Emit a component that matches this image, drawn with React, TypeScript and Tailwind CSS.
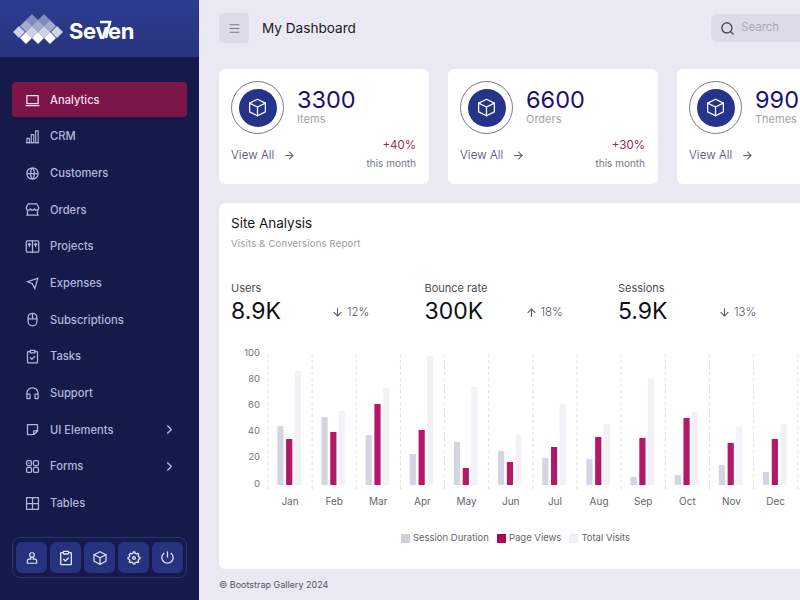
import type { ReactNode } from 'react'
import {
  RiArrowDownLine,
  RiArrowRightLine,
  RiArrowRightSLine,
  RiArrowUpLine,
  RiGlobalLine,
  RiHeadphoneLine,
  RiMacbookLine,
  RiMenuLine,
  RiSearchLine,
  RiSendPlaneLine,
  RiSettings5Line,
  RiShutDownLine,
  RiStickyNoteLine,
  RiStore2Line,
} from 'react-icons/ri'

function Icon({ children, size = 15, stroke = 2 }: { children: ReactNode; size?: number; stroke?: number }) {
  return (
    <svg
      viewBox="0 0 24 24"
      width={size}
      height={size}
      fill="none"
      stroke="currentColor"
      strokeWidth={stroke}
      strokeLinecap="round"
      strokeLinejoin="round"
    >
      {children}
    </svg>
  )
}

function BarsIcon() {
  return (
    <Icon stroke={1.8}>
      <path d="M2 22h20" />
      <rect x="3" y="15" width="4" height="7" />
      <rect x="10" y="9" width="4" height="13" />
      <rect x="17" y="3" width="4" height="19" />
    </Icon>
  )
}

function PackageIcon() {
  return (
    <Icon>
      <rect x="2" y="3" width="20" height="18" rx="2" />
      <path d="M12 3v18M7 8v4M17 8v4M5 9l2-2 2 2M15 9l2-2 2 2" />
    </Icon>
  )
}

function MouseIcon() {
  return (
    <Icon>
      <rect x="5" y="2" width="14" height="20" rx="7" />
      <path d="M12 2v9M5 11h14" />
    </Icon>
  )
}

function ClipboardCheckIcon({ size = 15 }: { size?: number }) {
  return (
    <Icon size={size}>
      <path d="M8 4H5a1 1 0 0 0-1 1v16a1 1 0 0 0 1 1h14a1 1 0 0 0 1-1V5a1 1 0 0 0-1-1h-3" />
      <rect x="8" y="2" width="8" height="4" rx="1" />
      <path d="M8.5 14l2.5 2.5 4.5-4.5" />
    </Icon>
  )
}

function FormsIcon() {
  return (
    <Icon>
      <rect x="2.5" y="2.5" width="8" height="8" rx="2.5" />
      <rect x="13.5" y="2.5" width="8" height="8" rx="2.5" />
      <rect x="2.5" y="13.5" width="8" height="8" rx="2.5" />
      <rect x="13.5" y="13.5" width="8" height="8" rx="2.5" />
      <path d="M5 6.5l1.2 1.2L8.2 5.5" strokeWidth="1.4" />
    </Icon>
  )
}

function TableIcon() {
  return (
    <Icon>
      <rect x="2.5" y="2.5" width="19" height="19" />
      <path d="M12 2.5v19M2.5 12h19" />
    </Icon>
  )
}

function UserBaseIcon() {
  return (
    <Icon size={14}>
      <circle cx="12" cy="7" r="4" />
      <path d="M10 11v3H7a3 3 0 0 0-3 3v4h16v-4a3 3 0 0 0-3-3h-3v-3" />
    </Icon>
  )
}

function CubeIcon({ size, stroke = 1.5 }: { size: number; stroke?: number }) {
  return (
    <Icon size={size} stroke={stroke}>
      <path d="M12 2.5l9 4.5v10l-9 4.5-9-4.5V7z" />
      <path d="M3 7l9 4.5L21 7M12 11.5v10" />
    </Icon>
  )
}

const iconClass = 'h-[15px] w-[15px]'

const navItems: { label: string; icon: ReactNode; active?: boolean; more?: boolean }[] = [
  { label: 'Analytics', icon: <RiMacbookLine className={iconClass} />, active: true },
  { label: 'CRM', icon: <BarsIcon /> },
  { label: 'Customers', icon: <RiGlobalLine className={iconClass} /> },
  { label: 'Orders', icon: <RiStore2Line className={iconClass} /> },
  { label: 'Projects', icon: <PackageIcon /> },
  { label: 'Expenses', icon: <RiSendPlaneLine className={iconClass} /> },
  { label: 'Subscriptions', icon: <MouseIcon /> },
  { label: 'Tasks', icon: <ClipboardCheckIcon /> },
  { label: 'Support', icon: <RiHeadphoneLine className={iconClass} /> },
  { label: 'UI Elements', icon: <RiStickyNoteLine className={iconClass} />, more: true },
  { label: 'Forms', icon: <FormsIcon />, more: true },
  { label: 'Tables', icon: <TableIcon /> },
]

const toolButtons = [
  <UserBaseIcon key="user" />,
  <ClipboardCheckIcon key="tasks" size={16} />,
  <CubeIcon key="box" size={16} stroke={1.8} />,
  <RiSettings5Line key="settings" className="h-[16px] w-[16px]" />,
  <RiShutDownLine key="power" className="h-[15px] w-[15px]" />,
]

const summaryCards: { value: string; label: string; change?: string }[] = [
  { value: '3300', label: 'Items', change: '+40%' },
  { value: '6600', label: 'Orders', change: '+30%' },
  { value: '990', label: 'Themes' },
]

const stats = [
  { label: 'Users', value: '8.9K', change: '12%', down: true },
  { label: 'Bounce rate', value: '300K', change: '18%', down: false },
  { label: 'Sessions', value: '5.9K', change: '13%', down: true },
]

// bar heights in pixels, read off the picture: session, page views, total visits
const months: [string, number, number, number][] = [
  ['Jan', 59, 46, 114],
  ['Feb', 68, 53, 74],
  ['Mar', 50, 81, 97],
  ['Apr', 31, 55, 129],
  ['May', 43, 17, 98],
  ['Jun', 34, 23, 50],
  ['Jul', 27, 38, 81],
  ['Aug', 26, 48, 61],
  ['Sep', 8, 47, 107],
  ['Oct', 10, 67, 73],
  ['Nov', 20, 42, 59],
  ['Dec', 13, 46, 61],
]

const diamonds = [
  { y: 20, xs: [32, 44], opacity: 0.42 },
  { y: 26, xs: [26, 38, 50], opacity: 0.58 },
  { y: 32, xs: [19, 32, 44, 57], opacity: 0.78 },
  { y: 38, xs: [26, 38, 50], opacity: 1 },
]

function Logo() {
  return (
    <div className="flex h-[57px] shrink-0 items-center bg-gradient-to-b from-[#2c3c8f] to-[#27347f] pl-[13px]">
      <svg viewBox="13 13 50 32" className="h-8 w-[50px]">
        {diamonds.map((row) =>
          row.xs.map((x) => (
            <path
              key={`${row.y}-${x}`}
              d={`M${x} ${row.y - 6}l6 6-6 6-6-6z`}
              fill="#fff"
              fillOpacity={row.opacity}
            />
          )),
        )}
      </svg>
      <div className="relative mt-[4px] ml-[6px] text-[22px] leading-none font-bold tracking-[-0.3px] text-white">
        Seven
        <svg viewBox="0 0 14 20" className="absolute top-[0px] left-[30px] h-[20px] w-[14px]">
          <path d="M1 2h10L7 18" fill="none" stroke="#fff" strokeWidth="2.6" />
        </svg>
      </div>
    </div>
  )
}

function Sidebar() {
  return (
    <aside className="flex h-full w-[199px] shrink-0 flex-col bg-[#151a4b]">
      <Logo />
      <nav className="flex flex-1 flex-col px-3 pt-[25px]">
        {navItems.map((item) => (
          <div
            key={item.label}
            className={`mb-[1.67px] flex h-[35px] shrink-0 items-center gap-[10px] rounded pt-[1px] pr-[9px] pl-[13px] text-[11.2px] font-medium ${
              item.active ? 'bg-[#7d1648] text-[#f6dfe9]' : 'text-[#b3b6dc]'
            }`}
          >
            {item.icon}
            <span className="flex-1">{item.label}</span>
            {item.more && <RiArrowRightSLine className="h-[17px] w-[17px]" />}
          </div>
        ))}
      </nav>
      <div className="mx-3 mb-[22px] flex h-[41px] items-center gap-[3px] rounded-lg border border-[#2a3474] px-[3px]">
        {toolButtons.map((button, i) => (
          <div key={i} className="flex h-[31px] w-[31px] items-center justify-center rounded-md bg-[#27337f] text-[#e4e6f7]">
            {button}
          </div>
        ))}
      </div>
    </aside>
  )
}

function SummaryCard({ value, label, change }: { value: string; label: string; change?: string }) {
  return (
    <div className="h-[115px] w-[210px] shrink-0 rounded-md bg-white px-3 pt-3">
      <div className="flex items-center gap-[13px]">
        <div className="flex h-[53px] w-[53px] items-center justify-center rounded-full border border-[#77778f]">
          <div className="flex h-[38px] w-[38px] items-center justify-center rounded-full bg-[#26338b] text-white">
            <CubeIcon size={21} stroke={1.4} />
          </div>
        </div>
        <div className="-mt-[4px]">
          <div className="text-[23.5px] leading-[27px] text-[#1b1078]">{value}</div>
          <div className="text-[11px] leading-[12px] text-[#a3a3a8]">{label}</div>
        </div>
      </div>
      <div className="mt-[3px] flex items-start justify-between pr-[1px]">
        <div className="mt-[10px] flex items-center gap-[9px] text-[11.5px] font-light tracking-[0.1px] text-[#3f3e73]">
          View All
          <RiArrowRightLine className="h-[13px] w-[13px] text-[#666]" />
        </div>
        {change && (
          <div className="text-right">
            <div className="text-[11.5px] leading-[17px] text-[#a3255a]">{change}</div>
            <div className="text-[10px] leading-[18px] text-[#77777f]">this month</div>
          </div>
        )}
      </div>
    </div>
  )
}

function Chart() {
  const lines = Array.from({ length: 13 }, (_, i) => 37 + 44.15 * i)
  return (
    <svg viewBox="0 0 569 170" className="mt-[19px] h-[170px] w-[569px]">
      {lines.map((x) => (
        <line key={x} x1={x} x2={x} y1="9" y2="145" stroke="#dcdce2" strokeDasharray="3 3" />
      ))}
      {[0, 20, 40, 60, 80, 100].map((tick, i) => (
        <text key={tick} x="29" y={141.5 - i * 26.2} textAnchor="end" fontSize="9.5" fill="#777">
          {tick}
        </text>
      ))}
      {months.map(([name, session, page, total], i) => {
        const left = lines[i] + 9.3
        return (
          <g key={name}>
            <rect x={left} y={140 - session} width="6.2" height={session} fill="#d5d4e2" />
            <rect x={left + 8.8} y={140 - page} width="6.2" height={page} fill="#b5186b" />
            <rect x={left + 17.4} y={140 - total} width="6.2" height={total} fill="#f3f1f6" />
            <text x={lines[i] + 22} y="160" textAnchor="middle" fontSize="10" fill="#666">
              {name}
            </text>
          </g>
        )
      })}
    </svg>
  )
}

function Legend() {
  const items = [
    { label: 'Session Duration', color: 'bg-[#d0cfdc]' },
    { label: 'Page Views', color: 'bg-[#a8064f]' },
    { label: 'Total Visits', color: 'bg-[#f0eff4]' },
  ]
  return (
    <div className="mt-[17px] flex w-[569px] items-center justify-center gap-[8px] text-[9.5px] leading-[12px] text-[#666]">
      {items.map((item) => (
        <div key={item.label} className="flex items-center gap-[3px]">
          <span className={`h-[9px] w-[9px] ${item.color}`} />
          {item.label}
        </div>
      ))}
    </div>
  )
}

function SiteAnalysis() {
  return (
    <section className="mt-[19px] h-[366px] w-[640px] rounded-md bg-white px-3 pt-[11px]">
      <h2 className="text-[13.5px] leading-[18px] text-[#16161c]">Site Analysis</h2>
      <p className="mt-[5px] text-[9.5px] leading-[14px] tracking-[0.2px] text-[#9a9aa2]">Visits &amp; Conversions Report</p>
      <div className="mt-[30px] flex">
        {stats.map((stat) => (
          <div key={stat.label} className="w-[193.5px] shrink-0">
            <div className="text-[11px] leading-[14px] text-[#4d4d55]">{stat.label}</div>
            <div className="mt-[1px] flex items-center">
              <div className="w-[100px] text-[23px] leading-[30px] text-[#0f0f14]">{stat.value}</div>
              <div className="mt-[3px] flex items-center gap-[3px] text-[11.5px] font-light text-[#55555f]">
                {stat.down ? <RiArrowDownLine className="h-[13px] w-[13px]" /> : <RiArrowUpLine className="h-[13px] w-[13px]" />}
                {stat.change}
              </div>
            </div>
          </div>
        ))}
      </div>
      <Chart />
      <Legend />
    </section>
  )
}

export default function App() {
  return (
    <div className="flex h-[600px] w-[800px] overflow-hidden bg-[#e9e8f3] font-['Inter',sans-serif]">
      <Sidebar />
      <main className="w-[601px] shrink-0 overflow-hidden pl-5">
        <header className="flex h-[69px] shrink-0 pt-[13px]">
          <button className="flex h-[30px] w-[30px] items-center justify-center rounded bg-[#dcdce8] text-[#77778a]">
            <RiMenuLine className="h-[13px] w-[13px]" />
          </button>
          <h1 className="ml-[13px] text-[13.6px] leading-[30px] text-[#1b1b24]">My Dashboard</h1>
          <div className="mt-[1px] ml-auto flex h-[28px] w-[100px] shrink-0 translate-x-[11px] items-center gap-[6px] rounded-l-md bg-[#dcdce8] pl-[9px] text-[11.5px] text-[#a9a9b5]">
            <RiSearchLine className="h-[15px] w-[15px] text-[#44444f]" />
            Search
          </div>
        </header>
        <div className="flex gap-[19px]">
          {summaryCards.map((card) => (
            <SummaryCard key={card.label} {...card} />
          ))}
        </div>
        <SiteAnalysis />
        <footer className="mt-[10px] text-[9px] leading-[12px] text-[#55555f]">© Bootstrap Gallery 2024</footer>
      </main>
    </div>
  )
}
